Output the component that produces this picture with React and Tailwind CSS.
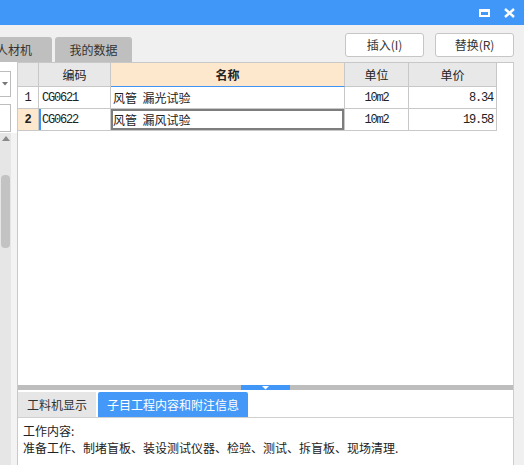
import React from 'react';

const cjk = { fontFamily: '"Noto Sans CJK SC", "Noto Sans", sans-serif' };
const mono = { fontFamily: '"Liberation Mono", "DejaVu Sans Mono", monospace' };

const rows = [
  { no: '1', code: 'CG0621', name: '风管  漏光试验', unit: '10m2', price: '8.34' },
  { no: '2', code: 'CG0622', name: '风管  漏风试验', unit: '10m2', price: '19.58', active: true },
];

const TitleBar = () => (
  <div className="h-[25px] bg-[#4197f8] flex items-center justify-end shrink-0">
    <svg width="11" height="8" viewBox="0 0 11 8" className="mr-[14px]">
      <rect x="1" y="1.5" width="9" height="5.5" fill="none" stroke="white" strokeWidth="2" />
      <rect x="0" y="0" width="11" height="3" fill="white" />
    </svg>
    <svg width="11" height="10" viewBox="0 0 11 10" className="mr-[9px]">
      <path d="M1 1 L10 9 M10 1 L1 9" stroke="white" strokeWidth="2.4" />
    </svg>
  </div>
);

const Toolbar = () => (
  <div className="h-[37px] flex shrink-0" style={cjk}>
    <div className="flex items-end">
      <div className="w-[52px] h-[25px] bg-[#bfbfbf] rounded-tr-[3px] flex items-center justify-end pr-[20px] text-[12px] text-[#333] overflow-hidden whitespace-nowrap">
        <span className="shrink-0">人材机</span>
      </div>
      <div className="ml-[3px] w-[77px] h-[25px] bg-[#bfbfbf] rounded-t-[3px] flex items-center justify-center text-[12px] text-[#333]">
        我的数据
      </div>
    </div>
    <div className="ml-auto mr-[10px] mt-[8px] flex gap-[11px]">
      <button className="w-[79px] h-[24px] bg-white border border-[#c6c6c6] rounded-[3px] text-[12px] text-[#333]">插入(I)</button>
      <button className="w-[79px] h-[24px] bg-white border border-[#c6c6c6] rounded-[3px] text-[12px] text-[#333]">替换(R)</button>
    </div>
  </div>
);

const LeftPanel = () => (
  <div className="w-[18px] flex flex-col shrink-0 border-r border-[#c9c9c9]">
    <div className="h-[71px] bg-white pt-[9px]">
      <div className="w-[11px] h-[26px] border border-l-0 border-[#bdbdbd] flex items-center justify-center">
        <svg width="6" height="4" viewBox="0 0 6 4"><path d="M0 0 L6 0 L3 3.5 Z" fill="#777" /></svg>
      </div>
      <div className="mt-[7px] w-[11px] h-[28px] border border-l-0 border-[#bdbdbd]" />
    </div>
    <div className="flex-1 flex">
      <div className="w-[11px] bg-[#e6e6e6] flex flex-col items-center">
        <svg width="8" height="5" viewBox="0 0 8 5" className="mt-[3px]"><path d="M0 5 L8 5 L4 0 Z" fill="#8a8a8a" /></svg>
        <div className="mt-[34px] w-[9px] h-[73px] bg-[#c3c3c3] rounded-[4px]" />
      </div>
      <div className="flex-1 bg-[#f3f3f3]" />
    </div>
  </div>
);

const Grid = () => (
  <div className="h-[323px] bg-white border-t border-[#c8c8c8] shrink-0" style={cjk}>
    <div className="w-[479px] text-[12px] text-[#222]">
      <div className="flex h-[24px] border-b border-[#c8c8c8]">
        <div className="w-[21px] bg-[#e8e8e8] border-r border-[#c8c8c8]" />
        <div className="w-[72px] bg-[#e8e8e8] border-r border-[#c8c8c8] flex items-center justify-center">编码</div>
        <div className="w-[234px] bg-[#fde8cd] border-r border-[#c8c8c8] border-b border-b-[#3f93f5] -mb-px flex items-center justify-center font-bold">名称</div>
        <div className="w-[64px] bg-[#e8e8e8] border-r border-[#c8c8c8] flex items-center justify-center">单位</div>
        <div className="w-[88px] bg-[#e8e8e8] border-r border-[#c8c8c8] flex items-center justify-center">单价</div>
      </div>
      {rows.map((r) => (
        <div key={r.no} className="flex h-[22px] border-b border-[#c8c8c8]">
          <div
            className={`w-[21px] border-r border-[#c8c8c8] flex items-center justify-center text-[12px] ${r.active ? 'bg-[#fde8cd] font-bold' : 'bg-white'}`}
            style={mono}
          >
            {r.no}
          </div>
          <div
            className={`w-[72px] border-r border-[#c8c8c8] flex items-center pl-[3px] text-[12px] tracking-[-1.2px] ${r.active ? 'shadow-[inset_2px_0_0_#3f93f5]' : ''}`}
            style={mono}
          >
            {r.code}
          </div>
          <div
            className={`w-[234px] border-r border-[#c8c8c8] flex items-center pl-[2px] whitespace-pre ${r.active ? 'shadow-[inset_0_0_0_2px_#7d7d7d]' : ''}`}
          >
            {r.name}
          </div>
          <div className="w-[64px] border-r border-[#c8c8c8] flex items-center justify-center text-[12px] tracking-[-1.2px]" style={mono}>
            {r.unit}
          </div>
          <div className="w-[88px] border-r border-[#c8c8c8] flex items-center justify-end pr-[3px] text-[12px] tracking-[-1.2px]" style={mono}>
            {r.price}
          </div>
        </div>
      ))}
    </div>
  </div>
);

const Splitter = () => (
  <div className="h-[5px] bg-[#bdbdbd] shrink-0 flex">
    <div className="ml-[223px] w-[49px] bg-[#4197f8] flex justify-center">
      <svg width="7" height="4" viewBox="0 0 7 4" className="mt-px"><path d="M0 0 L7 0 L3.5 3.5 Z" fill="white" /></svg>
    </div>
  </div>
);

const DetailPanel = () => (
  <div className="flex-1 flex flex-col bg-white" style={cjk}>
    <div className="mt-[2px] h-[26px] flex items-end gap-[2px] border-b border-[#d0d0d0]">
      <div className="w-[78px] h-[25px] bg-[#e6e6e6] flex items-center justify-center text-[12px] text-[#333]">工料机显示</div>
      <div className="w-[150px] h-[25px] bg-[#4499f8] rounded-t-[2px] flex items-center justify-center text-[12px] text-white">子目工程内容和附注信息</div>
    </div>
    <div className="pt-[4px] pl-[5px] text-[12px] leading-[17px] text-[#222]">
      <div>工作内容:</div>
      <div>准备工作、制堵盲板、装设测试仪器、检验、测试、拆盲板、现场清理.</div>
    </div>
  </div>
);

export default function App() {
  return (
    <div className="w-[524px] h-[465px] bg-[#f0f0f0] flex flex-col overflow-hidden">
      <TitleBar />
      <Toolbar />
      <div className="flex-1 flex min-h-0">
        <LeftPanel />
        <div className="w-[496px] flex flex-col border-r border-[#cdcdcd] bg-white">
          <Grid />
          <Splitter />
          <DetailPanel />
        </div>
      </div>
    </div>
  );
}
